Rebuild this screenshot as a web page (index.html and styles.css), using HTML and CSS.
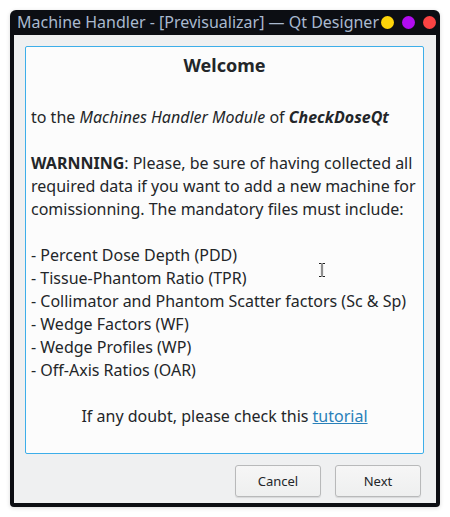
FILE: index.html
```html
<!DOCTYPE html>
<html>
<head>
<meta charset="utf-8">
<link rel="stylesheet" href="styles.css">
</head>
<body>
<div class="window">
  <div class="titlebar">
    <span class="title">Machine Handler - [Previsualizar] — Qt Designer</span>
    <div class="dots">
      <span class="dot yellow"></span>
      <span class="dot purple"></span>
      <span class="dot red"></span>
    </div>
  </div>
  <div class="content">
    <div class="textbox">
      <div class="heading">Welcome</div>
      <div class="line">&nbsp;</div>
      <div class="line">to the <i>Machines Handler Module</i> of <b><i>CheckDoseQt</i></b></div>
      <div class="line">&nbsp;</div>
      <div class="line"><b>WARNNING</b>: Please, be sure of having collected all</div>
      <div class="line">required data if you want to add a new machine for</div>
      <div class="line">comissionning. The mandatory files must include:</div>
      <div class="line">&nbsp;</div>
      <div class="line">- Percent Dose Depth (PDD)</div>
      <div class="line">- Tissue-Phantom Ratio (TPR)</div>
      <div class="line">- Collimator and Phantom Scatter factors (Sc &amp; Sp)</div>
      <div class="line">- Wedge Factors (WF)</div>
      <div class="line">- Wedge Profiles (WP)</div>
      <div class="line">- Off-Axis Ratios (OAR)</div>
      <div class="line">&nbsp;</div>
      <div class="line center">If any doubt, please check this <a class="link">tutorial</a></div>
      <svg class="cursor" width="8" height="16" viewBox="0 0 8 16">
        <path d="M1 1.5h2.5M4.5 1.5h2.5M4 2v12M1 14.5h2.5M4.5 14.5h2.5" stroke="#ffffff" stroke-width="3" fill="none" stroke-linecap="round"/>
        <path d="M1 1.5h2.5M4.5 1.5h2.5M4 2v12M1 14.5h2.5M4.5 14.5h2.5" stroke="#1e1e1e" stroke-width="1" fill="none"/>
      </svg>
    </div>
    <div class="buttons">
      <button class="btn">Cancel</button>
      <button class="btn">Next</button>
    </div>
  </div>
</div>
</body>
</html>
```
FILE: styles.css
```css
html, body {
  margin: 0;
  padding: 0;
  background: #ffffff;
}
body {
  font-family: "Noto Sans", sans-serif;
  padding: 10px;
  width: 430px;
}
.window {
  width: 430px;
  height: 497px;
  background: #0c0e13;
  border-radius: 6px 6px 4px 4px;
  display: flex;
  flex-direction: column;
  box-shadow: 0 1px 4px rgba(0,0,0,0.15);
}
.titlebar {
  height: 25px;
  display: flex;
  align-items: center;
  justify-content: space-between;
  padding: 0 4px 0 7px;
}
.title {
  color: #a9b9cf;
  font-size: 16px;
  line-height: 25px;
  white-space: nowrap;
}
.dots {
  display: flex;
  gap: 8px;
  align-items: center;
}
.dot {
  width: 13px;
  height: 13px;
  border-radius: 50%;
  display: block;
}
.yellow { background: #fdd40a; }
.purple { background: #b10cf0; }
.red { background: #fb4343; }
.content {
  flex: 1;
  margin: 0 4px 4px 4px;
  background: #eff0f1;
  display: flex;
  flex-direction: column;
  padding: 11px 12px 5px 11px;
}
.textbox {
  position: relative;
  height: 408px;
  box-sizing: border-box;
  border: 1px solid #3daee9;
  border-radius: 2px;
  background: #fcfcfc;
  padding: 0 5px;
  color: #232629;
  font-size: 16px;
}
.heading {
  text-align: center;
  font-weight: bold;
  font-size: 18px;
  line-height: 36px;
}
.line {
  line-height: 23px;
  white-space: nowrap;
}
.center {
  text-align: center;
}
.link {
  color: #2980b9;
  text-decoration: underline;
}
.cursor {
  position: absolute;
  left: 292px;
  top: 215px;
  filter: drop-shadow(0 0 0.5px rgba(0,0,0,0.25));
}
.buttons {
  display: flex;
  justify-content: flex-end;
  gap: 14px;
  margin-top: 11px;
  padding-right: 3px;
}
.btn {
  width: 86px;
  height: 32px;
  font-family: "Noto Sans", sans-serif;
  font-size: 13px;
  color: #232629;
  background: linear-gradient(#f6f6f6, #eeefef);
  border: 1px solid #b8b9ba;
  border-radius: 3px;
  box-shadow: 0 1px 1px rgba(0,0,0,0.1);
}
```
